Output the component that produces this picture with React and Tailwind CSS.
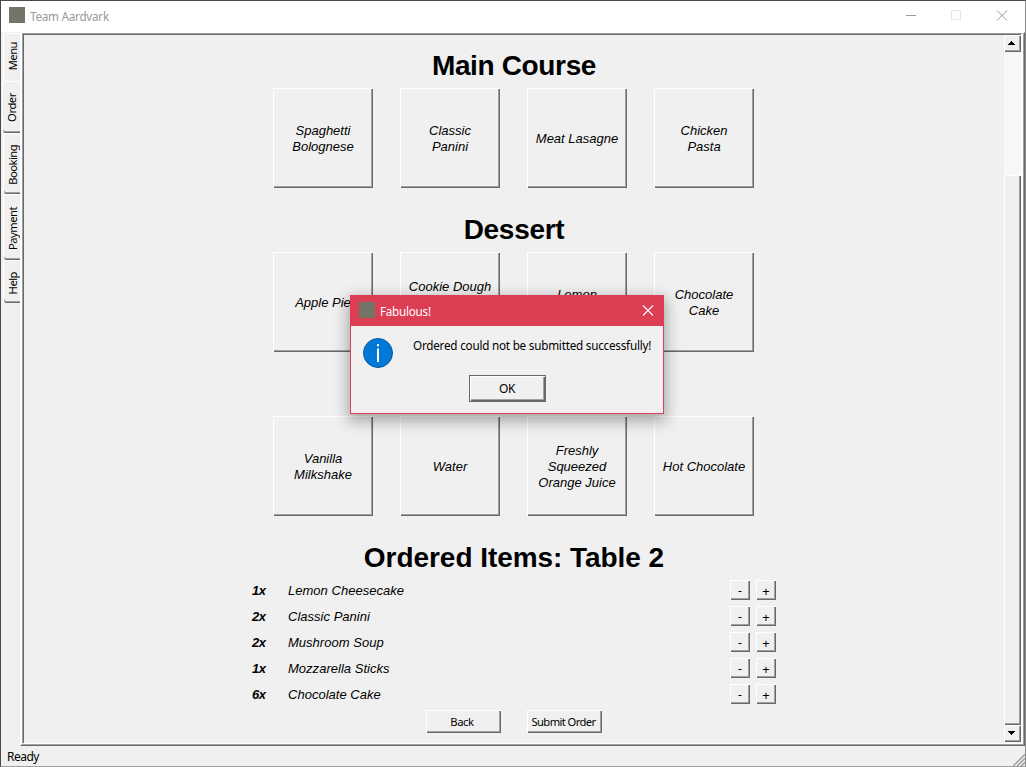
const raised =
  'shadow-[inset_1px_1px_0_#ffffff,inset_-1px_-1px_0_#696969,inset_-2px_-2px_0_#a0a0a0]';

const ui = "font-['Noto_Sans','Open_Sans',sans-serif]";

const bottomEdge = 'shadow-[inset_0_-1px_0_#696969,inset_0_-2px_0_#a0a0a0]';

const tabs = [
  { label: 'Menu', box: 'h-[48px] ml-[2px] w-[17px] pb-[2px] pl-[2px]', text: 'tracking-[-0.5px]' },
  { label: 'Order', box: `h-[52px] ml-[1px] w-[18px] pl-px ${bottomEdge}`, text: 'tracking-[-0.4px]' },
  { label: 'Booking', box: `h-[61px] ml-[2px] w-[17px] pt-px pl-[2px] ${bottomEdge}`, text: 'tracking-[-0.55px]' },
  { label: 'Payment', box: `h-[66px] ml-[2px] w-[17px] pt-px pl-[2px] ${bottomEdge}`, text: 'tracking-[-0.5px]' },
  { label: 'Help', box: `h-[43px] ml-[2px] w-[17px] pt-[3px] pl-[2px] ${bottomEdge}`, text: 'tracking-[-0.5px]' },
];

const mains = [['Spaghetti', 'Bolognese'], ['Classic', 'Panini'], ['Meat Lasagne'], ['Chicken', 'Pasta']];
const desserts = [['Apple Pie'], ['Cookie Dough'], ['Lemon'], ['Chocolate', 'Cake']];
const drinks = [['Vanilla', 'Milkshake'], ['Water'], ['Freshly', 'Squeezed', 'Orange Juice'], ['Hot Chocolate']];

const linePadding = { 'Cookie Dough': 'pb-[32px]', Lemon: 'pb-[16px]' };

const orders = [
  ['1x', 'Lemon Cheesecake'],
  ['2x', 'Classic Panini'],
  ['2x', 'Mushroom Soup'],
  ['1x', 'Mozzarella Sticks'],
  ['6x', 'Chocolate Cake'],
];

function Heading({ className, children }) {
  return (
    <h2 className={`flex h-full items-center justify-center text-[28px] leading-[32px] font-bold whitespace-nowrap ${className}`}>
      {children}
    </h2>
  );
}

function ItemRow({ items }) {
  return (
    <div className="ml-[249px] flex gap-[27px]">
      {items.map((lines) => (
        <button
          key={lines.join(' ')}
          className={`flex h-[100px] w-[100px] flex-col items-center justify-center pt-[2px] text-[13px] leading-[16px] italic ${raised}`}
        >
          {lines.map((line) => (
            <span key={line} className={`whitespace-nowrap ${linePadding[line] ?? ''}`}>{line}</span>
          ))}
        </button>
      ))}
    </div>
  );
}

function Tab({ tab }) {
  return (
    <div className={`flex shrink-0 items-center justify-center rounded-l-[3px] border-t border-l border-white ${tab.box}`}>
      <span className={`rotate-180 text-[11.2px] leading-[14px] [writing-mode:vertical-rl] ${tab.text}`}>{tab.label}</span>
    </div>
  );
}

function ScrollBar() {
  return (
    <div className="flex w-[17px] shrink-0 flex-col">
      <div className={`flex h-[17px] items-center justify-center pr-[2px] pb-px ${raised}`}>
        <svg width="7" height="4" shapeRendering="crispEdges"><path d="M3 0h1v1h1v1h1v1h1v1H0V3h1V2h1V1h1z" /></svg>
      </div>
      <div className="h-[123px] bg-[repeating-conic-gradient(#ffffff_0_25%,#f0f0f0_0_50%)] bg-[length:2px_2px]" />
      <div className={`h-[550px] ${raised}`} />
      <div className={`flex h-[17px] items-center justify-center pr-[2px] pb-px ${raised}`}>
        <svg width="7" height="4" shapeRendering="crispEdges"><path d="M0 0h7v1H6v1H5v1H4v1H3V3H2V2H1V1H0z" /></svg>
      </div>
    </div>
  );
}

function TitleBar() {
  return (
    <header className="flex h-[31px] shrink-0 items-center bg-white pl-[8px]">
      <div className="mb-[3px] h-4 w-4 bg-[#727567]" />
      <span className="mb-px ml-[5px] text-[11.7px] leading-4 tracking-[-0.25px] text-[#999999]">Team Aardvark</span>
      <svg className="mb-px ml-auto" width="132" height="30" fill="none" shapeRendering="crispEdges">
        <path d="M13 14.5h10" stroke="#999" />
        <path d="M58.5 9.5h9v9h-9z" stroke="#e5e5e5" />
        <path d="M104 9.5l10 10M114 9.5l-10 10" stroke="#999" shapeRendering="auto" />
      </svg>
    </header>
  );
}

function Dialog() {
  return (
    <div className={`absolute top-[294px] left-[349px] flex h-[119px] w-[314px] flex-col border border-[#dc3e54] bg-[#f0f0f0] shadow-[0_5px_14px_2px_rgba(0,0,0,0.32)] ${ui}`}>
      <div className="flex h-[30px] shrink-0 items-center bg-[#dc3e54] pl-[8px]">
        <div className="mb-[2px] h-4 w-4 bg-[#727567]" />
        <span className="ml-[5px] text-[11.7px] leading-4 tracking-[-0.25px] text-white">Fabulous!</span>
        <svg className="mr-[9px] mb-px ml-auto" width="12" height="12" fill="none"><path d="M1 .5l10 10M11 .5l-10 10" stroke="#fff" strokeWidth="1.1" /></svg>
      </div>
      <div className="flex pt-[12px] pl-[12px]">
        <svg width="30" height="30" viewBox="0 0 30 30">
          <circle cx="15" cy="15" r="14.5" fill="#0078d7" stroke="#075a9f" />
          <path d="M14 10.500h2V24h-2zM14 6h2v2.300h-2z" fill="#fff" />
        </svg>
        <span className="ml-[20px] text-[11.7px] leading-[14px] tracking-[-0.22px] whitespace-nowrap">Ordered could not be submitted successfully!</span>
      </div>
      <button className="mt-[7px] ml-[118px] flex h-[27px] w-[77px] items-center justify-center border border-[#696969] pr-px text-[12px] leading-4 tracking-[-0.3px] shadow-[inset_1px_1px_0_#ffffff,inset_-1px_-1px_0_#696969,inset_-2px_-2px_0_#a0a0a0]">
        OK
      </button>
    </div>
  );
}

export default function App() {
  return (
    <div className={`relative flex h-[767px] w-[1026px] flex-col overflow-hidden border-t border-r border-b border-l border-t-[#4a4a4a] border-r-[#8c8c8c] border-b-[#a0a0a0] border-l-[#4a4a4a] bg-[#f0f0f0] text-black ${ui}`}>
      <TitleBar />
      <div className="flex h-[714px] shrink-0">
        <nav className="flex w-[19px] shrink-0 flex-col pt-[1px]">
          {tabs.map((tab) => <Tab key={tab.label} tab={tab} />)}
        </nav>
        <div className="flex w-[1005px] border-t border-r border-b border-l border-t-white border-r-[#696969] border-b-[#696969] border-l-white">
          <div className="flex w-full border-r border-b border-l border-r-[#a0a0a0] border-b-[#a0a0a0] border-l-white">
            <div className="flex w-full border-t border-r-2 border-b border-l border-t-[#a0a0a0] border-r-white border-b-white border-l-[#a0a0a0]">
              <div className="flex w-full border-t border-l border-[#696969]">
                <main className="w-[980px] shrink-0 overflow-hidden font-['Liberation_Sans',Arial,sans-serif]">
                  <div className="h-[53px] pt-[8px]"><Heading className="tracking-[-0.35px]">Main Course</Heading></div>
                  <ItemRow items={mains} />
                  <div className="h-[64px] pt-[19px]"><Heading className="tracking-[-0.3px]">Dessert</Heading></div>
                  <ItemRow items={desserts} />
                  <div className="h-[64px]" />
                  <ItemRow items={drinks} />
                  <div className="h-[64px] pt-[19px]"><Heading className="tracking-[-0.05px]">Ordered Items: Table 2</Heading></div>
                  <div className="flex flex-col gap-[6px]">
                    {orders.map(([count, name]) => (
                      <div key={name} className="flex h-5 items-center pl-[228px] text-[13px] leading-4 italic">
                        <span className="w-[36px] pt-[2px] font-bold tracking-[-0.4px]">{count}</span>
                        <span className="w-[442px] pt-[2px] tracking-[0.02px]">{name}</span>
                        <button className={`h-5 w-5 pt-[2px] text-[12px] leading-4 not-italic ${ui} ${raised}`}>-</button>
                        <button className={`ml-[6px] h-5 w-5 pt-[2px] text-[13px] leading-4 not-italic ${ui} ${raised}`}>+</button>
                      </div>
                    ))}
                  </div>
                  <div className={`mt-[6px] ml-[402px] flex gap-[26px] text-[11.2px] leading-4 ${ui}`}>
                    <button className={`h-[23px] w-[75px] pt-px pr-[3px] tracking-[-0.4px] ${raised}`}>Back</button>
                    <button className={`h-[23px] w-[75px] pt-px pr-[2px] tracking-[-0.6px] whitespace-nowrap ${raised}`}>Submit Order</button>
                  </div>
                </main>
                <ScrollBar />
              </div>
            </div>
          </div>
        </div>
      </div>
      <footer className="relative flex flex-1 items-center pt-[2px] pl-[6px] text-[12px] leading-4 tracking-[-0.5px]">
        Ready
        <svg className="absolute right-0 bottom-0" width="12" height="12" fill="none">
          <path d="M0 12L12 0M4 12l8-8M8 12l4-4" stroke="#a0a0a0" strokeWidth="1.8" />
          <path d="M-1.5 12L12 -1.5M2.500 12l9.500-9.500M6.500 12l5.500-5.500" stroke="#fff" strokeWidth=".8" />
        </svg>
      </footer>
      <Dialog />
    </div>
  );
}
